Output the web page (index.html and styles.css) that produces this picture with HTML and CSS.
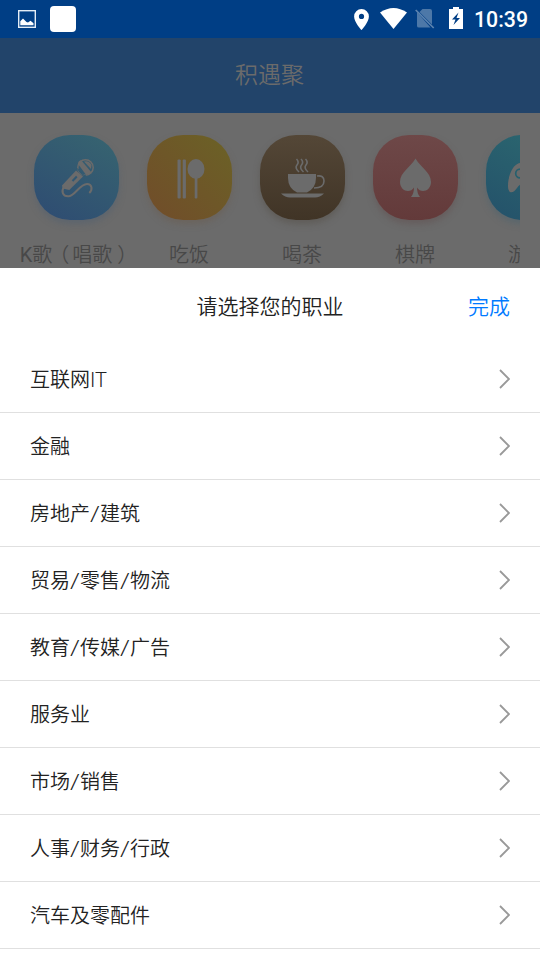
FILE: index.html
```html
<!DOCTYPE html>
<html lang="zh-CN">
<head>
<meta charset="utf-8">
<title>积遇聚</title>
<link rel="stylesheet" href="styles.css">
</head>
<body>
<div class="status">
  <svg class="s-image" width="18" height="18" viewBox="0 0 18 18"><rect x=".7" y=".7" width="16.600" height="16.600" fill="none" stroke="#e4edf6" stroke-width="1.400"/><path d="M2.300 15.300v-4l2.700-2.800 3.500 3.500 1.500.5 2.500-1.700 3 2.500v2z" fill="#fff"/></svg>
  <span class="s-app"></span>
  <span class="grow"></span>
  <svg class="s-pin" width="15" height="21" viewBox="0 0 15 21"><path fill="#fff" fill-rule="evenodd" d="M7.500 0A7.400 7.400 0 0 0 .1 7.400C.1 13 7.500 21 7.500 21s7.400-8 7.400-13.600A7.400 7.400 0 0 0 7.500 0zm0 4.800a2.600 2.600 0 1 1 0 5.200 2.600 2.600 0 0 1 0-5.200z"/></svg>
  <svg class="s-wifi" width="27" height="21" viewBox="0 0 27 21"><path fill="#fff" d="M0 4.500Q13.500-4.500 27 4.500L13.500 21z"/></svg>
  <svg class="s-sim" width="20" height="20" viewBox="0 0 20 20"><path fill="#4d78a8" d="M7.500 0H15q2 0 2 2v13.500L4.500 3zM2 3v14q0 1.500 2 1.500h11.500z"/><path d="M.7 1l18 18" stroke="#5c84b0" stroke-width="1.700"/></svg>
  <svg class="s-bat" width="14" height="22" viewBox="0 0 14 22"><path fill="#fff" fill-rule="evenodd" d="M4 0h6v2h4v20H0V2h4zM9.500 5.500L3 12.500h3.500L4.500 18l6.500-7H7.500z"/></svg>
  <span class="time">10:39</span>
</div>
<header class="bar">积遇聚</header>
<nav class="cats">
  <div class="cat"><div class="ico sing"><svg width="85" height="85" viewBox="0 0 85 85" fill="none" stroke="#6b6b6b"><circle cx="51.500" cy="32.500" r="7.700" stroke-width="1.500"/><path d="M44 29q0-3 3-4l10.500 12.500q-2 2.500-5.500 2.300z" fill="#6b6b6b" stroke="none"/><path d="M50 26.500q5-1.500 7.500 3.500l-.5 4z" fill="#6b6b6b" stroke="none"/><path d="M42 35.500l7 6L35.300 55l-6.600-1.500-.7-3z" fill="#6b6b6b" stroke="none"/><path d="M43.500 33.500q3.500 6 8.500 7.500" stroke="#325a71" stroke-width="1.200"/><path d="M38.500 46l4.300-4.500" stroke="#315873" stroke-width="2"/><path d="M30 52c-3 4-1.500 10 5 9.300 6-.8 11-12.300 18-12.300 5 0 6 5.500 2.300 9" stroke-width="2"/></svg></div><span><em>K</em>歌<i class="open">（</i>唱歌<i class="close">）</i></span></div>
  <div class="cat"><div class="ico eat"><svg width="85" height="85" viewBox="0 0 85 85" fill="#6b6b6b"><rect x="30.500" y="24.500" width="3.200" height="39" rx="1"/><rect x="35.700" y="24.500" width="3.200" height="39" rx="1"/><ellipse cx="49" cy="34" rx="8.500" ry="10"/><rect x="47.700" y="42.500" width="2.700" height="21" rx="1"/></svg></div><span>吃饭</span></div>
  <div class="cat"><div class="ico tea"><svg width="85" height="85" viewBox="0 0 85 85" fill="#6b6b6b"><path d="M28 39h28v4q0 10-9 14.500H37q-9-4.500-9-14.500z"/><path d="M21 58.500h43q-4 4-9 4H30q-5 0-9-4z"/><path d="M57 41q7-1 7 5 0 7-10 7M36.500 24q3 3 .5 6t2 7M41 24q3 3 .5 6t2 7M45.500 24q3 3 .5 6t2 7" fill="none" stroke="#6b6b6b" stroke-width="1.600"/></svg></div><span>喝茶</span></div>
  <div class="cat"><div class="ico chess"><svg width="85" height="85" viewBox="0 0 85 85" fill="#6b6b6b"><path d="M42.500 23.500C47 32 58 37 58 47c0 9-10 12-14 5.500q0 6 3 9.500h-9q3-3.500 3-9.500c-4 6.500-14 3.500-14-5.500C27 37 38 32 42.500 23.500z"/></svg></div><span>棋牌</span></div>
  <div class="cat"><div class="ico game"><svg width="85" height="85" viewBox="0 0 85 85"><path fill="#6b6b6b" d="M35 28c-8 0-13 13-13 23 0 8 5 8 9 2 2-4 6-5 12-5s10 1 12 5c4 6 9 6 9-2 0-10-5-23-13-23z"/><circle cx="34" cy="38.500" r="4.300" fill="none" stroke="#27606e" stroke-width="1.700"/></svg></div><span>游戏</span></div>
</nav>
<section class="sheet">
  <div class="head"><span class="title">请选择您的职业</span><a class="done">完成</a></div>
  <ul class="list">
    <li><span>互联网<em>IT</em></span><svg class="chev" viewBox="0 0 12 20"><path d="M2 1l9 9-9 9"/></svg></li>
    <li><span>金融</span><svg class="chev" viewBox="0 0 12 20"><path d="M2 1l9 9-9 9"/></svg></li>
    <li><span>房地产<b>/</b>建筑</span><svg class="chev" viewBox="0 0 12 20"><path d="M2 1l9 9-9 9"/></svg></li>
    <li><span>贸易<b>/</b>零售<b>/</b>物流</span><svg class="chev" viewBox="0 0 12 20"><path d="M2 1l9 9-9 9"/></svg></li>
    <li><span>教育<b>/</b>传媒<b>/</b>广告</span><svg class="chev" viewBox="0 0 12 20"><path d="M2 1l9 9-9 9"/></svg></li>
    <li><span>服务业</span><svg class="chev" viewBox="0 0 12 20"><path d="M2 1l9 9-9 9"/></svg></li>
    <li><span>市场<b>/</b>销售</span><svg class="chev" viewBox="0 0 12 20"><path d="M2 1l9 9-9 9"/></svg></li>
    <li><span>人事<b>/</b>财务<b>/</b>行政</span><svg class="chev" viewBox="0 0 12 20"><path d="M2 1l9 9-9 9"/></svg></li>
    <li><span>汽车及零配件</span><svg class="chev" viewBox="0 0 12 20"><path d="M2 1l9 9-9 9"/></svg></li>
  </ul>
</section>
</body>
</html>
```
FILE: styles.css
```css
* { box-sizing: border-box; }
body {
  margin: 0;
  height: 960px;
  overflow: hidden;
  background: #fff;
  font-family: Roboto, "Noto Sans CJK SC DemiLight", "Noto Sans CJK SC", sans-serif;
  font-weight: 350;
}
svg { display: block; flex: none; }
i { font-style: normal; display: inline-block; }
em { font-style: normal; font-weight: 350; }
.status {
  height: 38px;
  display: flex;
  align-items: center;
  padding: 0 12px 0 18px;
  background: #003e85;
}
.s-app { width: 26px; height: 26px; margin-left: 14px; border-radius: 4px; background: #fff; }
.grow { flex: 1; }
.s-wifi { margin-left: 11px; margin-top: -1px; }
.s-sim { margin-left: 8px; }
.s-bat { margin-left: 14px; margin-top: -2px; }
.time {
  width: 54px;
  margin-left: 11px;
  padding-top: 2px;
  color: #fff;
  font-size: 21.300px;
  font-weight: 500;
  line-height: 38px;
  white-space: nowrap;
}
.bar {
  height: 75px;
  padding-right: 1px;
  background: #22446a;
  color: #6b6b6b;
  font-size: 23px;
  line-height: 75px;
  text-align: center;
}
.cats {
  height: 155px;
  padding: 22px 0 0 20px;
  border-right: 20px solid #6b6b6b;
  display: flex;
  background: #6b6b6b;
  overflow: clip;
}
.cat { flex: none; width: 113px; padding-right: 1px; display: flex; flex-direction: column; align-items: center; }
.ico { width: 85px; height: 85.500px; border-radius: 36px; }
.cat span { height: 30px; margin-top: 19.500px; color: #484848; font-size: 20px; line-height: 30px; white-space: nowrap; }
.cat em { font-weight: 400; }
.cat .open { transform: translateX(-3px); }
.cat .close { transform: translateX(5px); }
.sing { background: linear-gradient(30deg, #2e4b72, #376570); box-shadow: 0 4px 6px #54617099; }
.eat { background: linear-gradient(45deg, #714c2a, #6b6226); box-shadow: 0 4px 6px #6b5f5499; }
.tea { background: linear-gradient(#544737, #403426); box-shadow: 0 4px 6px #58534d99; }
.chess { background: linear-gradient(#6e4848, #633a3a); box-shadow: 0 4px 6px #63535399; }
.game { background: linear-gradient(30deg, #24516a, #2c6970); box-shadow: 0 4px 6px #4f646e99; }
.sheet { height: 692px; background: #fff; }
.head {
  height: 78px;
  padding: 0 30px 5px;
  display: grid;
  grid-template-columns: 1fr auto 1fr;
  align-items: center;
  font-size: 21px;
  color: #222;
}
.title { grid-column: 2; }
.done { justify-self: end; color: #007aff; }
.list { list-style: none; margin: 0; padding: 0; }
.list li {
  height: 67px;
  padding: 0 30px;
  display: flex;
  justify-content: space-between;
  align-items: center;
  border-bottom: 1px solid #e0e0e0;
  font-size: 20px;
  color: #222;
}
.list span { padding-bottom: 2px; }
.list b { display: inline-block; width: 10px; text-align: center; font-weight: 350; transform: scaleX(1.250); }
.chev { width: 12px; height: 20px; fill: none; stroke: #999; stroke-width: 1.800; }
```
